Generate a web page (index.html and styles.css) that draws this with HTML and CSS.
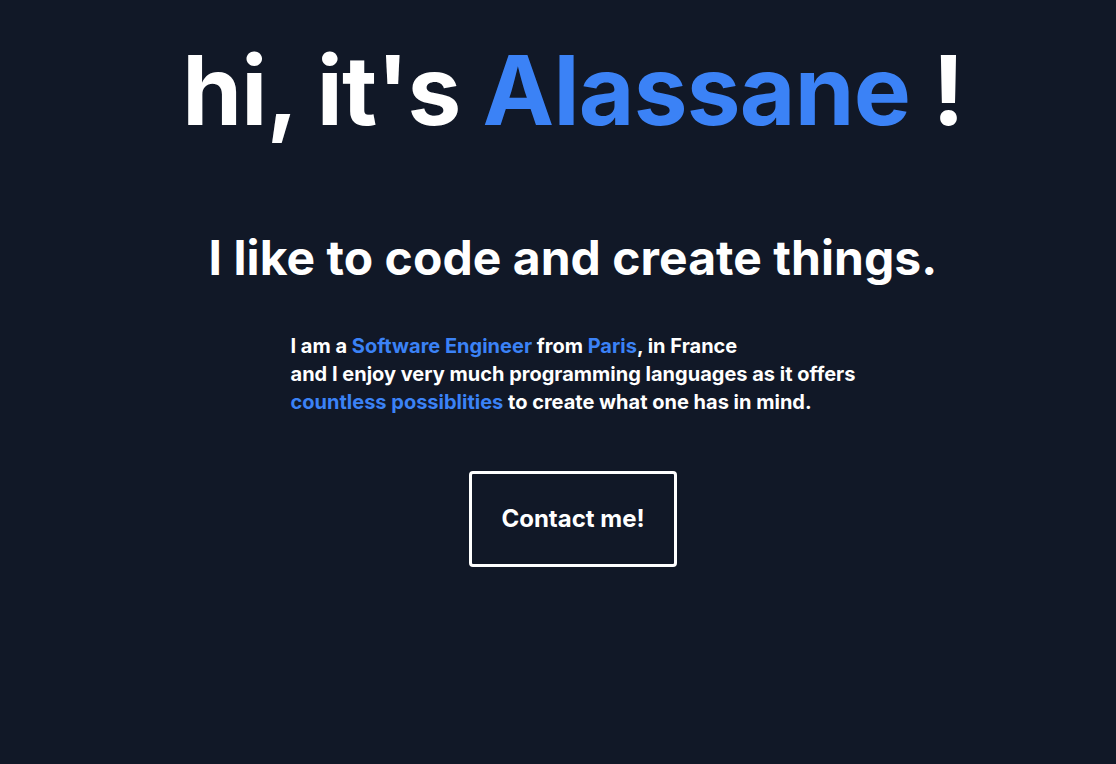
FILE: index.html
```html
<!DOCTYPE html>
<html lang="en">
<head>
<meta charset="utf-8">
<title>Alassane</title>
<link rel="stylesheet" href="styles.css">
</head>
<body>
<main class="hero">
  <h1 class="title">hi, it's <span class="accent">Alassane</span> !</h1>
  <h2 class="subtitle">I like to code and create things.</h2>
  <p class="intro">I am a <span class="accent">Software Engineer</span> from <span class="accent">Paris</span>, in France<br>
  and I enjoy very much programming languages as it offers<br>
  <span class="accent">countless possiblities</span> to create what one has in mind.</p>
  <a class="contact" href="#">Contact me!</a>
</main>
</body>
</html>
```

FILE: styles.css
```css
html, body {
  margin: 0;
  padding: 0;
  background: #111827;
  color: #ffffff;
  font-family: Inter, "Noto Sans", sans-serif;
  height: 100%;
}
.hero {
  display: flex;
  flex-direction: column;
  align-items: center;
  padding-left: 30px;
  padding-top: 30px;
}
.title {
  margin: 0;
  font-size: 96px;
  line-height: 1.25;
  font-weight: 700;
  letter-spacing: -0.75px;
}
.accent {
  color: #3b82f6;
}
.subtitle {
  margin: 78px 0 0 0;
  font-size: 48px;
  line-height: 1.25;
  font-weight: 700;
  letter-spacing: 0.05px;
}
.intro {
  margin: 44px 0 0 0;
  font-size: 20px;
  line-height: 28px;
  font-weight: 700;
  text-align: left;
}
.contact {
  margin-top: 55px;
  display: block;
  border: 3px solid #ffffff;
  border-radius: 4px;
  padding: 30px 29px 31px;
  color: #ffffff;
  text-decoration: none;
  font-size: 24px;
  font-weight: 700;
  line-height: 29px;
}
```
